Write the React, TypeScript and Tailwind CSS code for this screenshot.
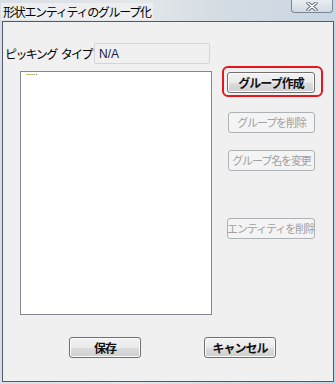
import { ReactNode } from 'react';

const font = { fontFamily: '"Noto Sans CJK JP", "Noto Sans", sans-serif' };

function WinButton({ children, bold, disabled, className = '' }: { children: ReactNode; bold?: boolean; disabled?: boolean; className?: string }) {
  return (
    <div
      className={
        'h-[21px] flex items-center justify-center rounded-[3px] border leading-none whitespace-nowrap overflow-hidden ' +
        (disabled
          ? 'border-[#adb2b5] bg-[#f4f4f4] text-[#a0a0a0] text-[11px] tracking-[-1.1px] '
          : 'border-[#707070] bg-[linear-gradient(#f2f2f2_0%,#ebebeb_50%,#dddddd_51%,#cfcfcf_100%)] text-[#111] text-[12px] tracking-[-1px] shadow-[inset_0_0_0_1px_#fcfcfc] ') +
        (bold ? 'font-bold ' : '') +
        className
      }
    >
      {children}
    </div>
  );
}

export default function App() {
  return (
    <div
      className="w-[336px] h-[384px] flex flex-col bg-[linear-gradient(90deg,#d9dfe5,#e3e7ea_40%,#d2dbe2_70%,#c8d6e3)] overflow-hidden"
      style={font}
    >
      <div className="h-[21px] flex items-start justify-between shrink-0">
        <div className="mt-[3px] ml-[1px] px-[2px] h-[17px] flex items-center bg-[#eceef0] text-[12px] tracking-[-1.3px] text-black leading-none whitespace-nowrap">
          形状エンティティのグループ化
        </div>
        <div className="mr-[3px] w-[42px] h-[13px] rounded-b-[4px] border border-t-0 border-[#7b8595] bg-[linear-gradient(#e9edf1,#d3dae2)] flex items-center justify-center">
          <svg width="12" height="9" viewBox="0 0 12 9">
            <path d="M2 1 L10 8 M10 1 L2 8" stroke="#5a6270" strokeWidth="3.2" strokeLinecap="round" />
            <path d="M2 1 L10 8 M10 1 L2 8" stroke="#ffffff" strokeWidth="1.6" strokeLinecap="round" />
          </svg>
        </div>
      </div>

      <div className="ml-[2px] w-[332px] h-[361px] border border-[#4f5b6a] bg-[#f0f0f0] flex flex-col shrink-0">
        <div className="mt-[21px] flex items-center">
          <div className="ml-[2px] w-[89px] flex gap-[4px] text-[12px] tracking-[-1.6px] text-black leading-none whitespace-nowrap">
            <span>ピッキング</span>
            <span>タイプ</span>
          </div>
          <div className="w-[116px] h-[21px] rounded-[2px] border border-[#d5d5d5] bg-[#f0f0f0] flex items-center pl-[4px] text-[12px] text-[#1a1a3a] leading-none" style={{ fontFamily: '"Liberation Sans", sans-serif' }}>
            N/A
          </div>
        </div>

        <div className="flex">
          <div className="ml-[17px] mt-[7px] w-[192px] h-[244px] border border-[#828790] bg-white relative">
            <div className="absolute left-[5px] top-[2px] w-[9px] h-[1px] bg-[#c8bc7a]" />
            <div className="absolute left-[15px] top-[2px] w-[1px] h-[1px] bg-[#777]" />
          </div>

          <div className="ml-[10px] mt-[2px] flex flex-col">
            <div className="w-[101px] h-[31px] rounded-[6px] border-2 border-[#e8161c] pl-[3px] pt-[4px]">
              <WinButton bold className="w-[88px]">グループ作成</WinButton>
            </div>
            <WinButton disabled className="ml-[6px] mt-[15px] w-[87px]">グループを削除</WinButton>
            <WinButton disabled className="ml-[6px] mt-[17px] w-[87px]">グループ名を変更</WinButton>
            <WinButton disabled className="ml-[5px] mt-[47px] w-[88px]">エンティティを削除</WinButton>
          </div>
        </div>

        <div className="mt-[22px] flex">
          <WinButton bold className="ml-[66px] w-[72px]">保存</WinButton>
          <WinButton bold className="ml-[63px] w-[72px]">キャンセル</WinButton>
        </div>
      </div>
    </div>
  );
}
